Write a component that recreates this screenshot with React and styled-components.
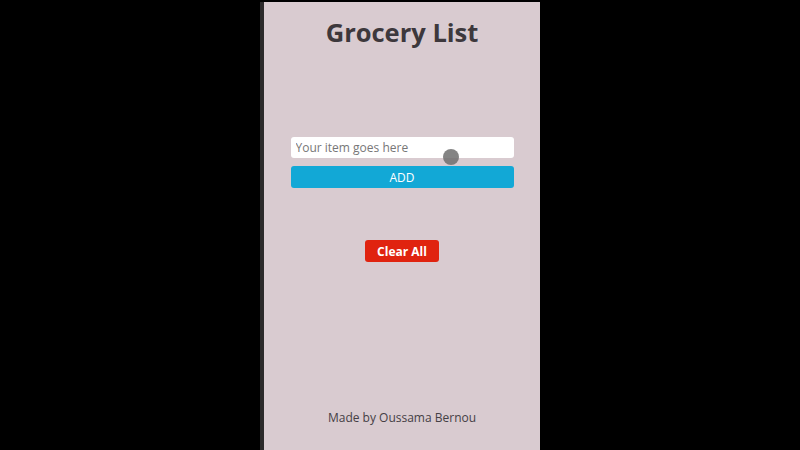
import React from "react";
import styled, { createGlobalStyle } from "styled-components";

const Global = createGlobalStyle`
  html, body { margin: 0; padding: 0; background: #000; }
  body { font-family: "Open Sans", "Noto Sans", sans-serif; }
`;

const Stage = styled.div`
  width: 800px;
  height: 450px;
  background: #000;
  display: flex;
  justify-content: center;
  overflow: hidden;
`;

const Panel = styled.div`
  position: relative;
  margin-top: 2px;
  width: 276px;
  height: 448px;
  background: #d9cbd0;
  border-left: 4px solid #2c2a2b;
  display: flex;
  flex-direction: column;
  align-items: center;
  box-sizing: content-box;
`;

const Title = styled.h1`
  margin: 12px 0 0;
  font-size: 25.5px;
  line-height: 36px;
  font-weight: 700;
  color: #3d383c;
`;

const Form = styled.div`
  margin-top: 87px;
  width: 223px;
  display: flex;
  flex-direction: column;
  gap: 8px;
`;

const Input = styled.input`
  box-sizing: border-box;
  width: 100%;
  height: 21px;
  border: none;
  border-radius: 3px;
  background: #fff;
  padding: 0 5px;
  font-family: "Open Sans", sans-serif;
  font-size: 12px;
  color: #333;
  outline: none;
  &::placeholder { color: #777; }
`;

const AddButton = styled.button`
  height: 22px;
  border: none;
  border-radius: 3px;
  background: #12a8d6;
  color: #fff;
  font-family: "Open Sans", sans-serif;
  font-size: 12px;
  padding: 0;
`;

const ClearButton = styled.button`
  margin-top: 52px;
  width: 74px;
  height: 22px;
  border: none;
  border-radius: 3px;
  background: #e0230f;
  color: #fff;
  font-family: "Open Sans", sans-serif;
  font-weight: 700;
  font-size: 12px;
  padding: 0;
`;

const Footer = styled.footer`
  margin-top: auto;
  margin-bottom: 24px;
  font-size: 12px;
  color: #454045;
`;

const Cursor = styled.div`
  position: absolute;
  left: 179px;
  top: 147px;
  width: 16px;
  height: 16px;
  border-radius: 50%;
  background: rgba(110, 110, 110, 0.85);
`;

export default function App() {
  return (
    <Stage>
      <Global />
      <Panel>
        <Title>Grocery List</Title>
        <Form>
          <Input placeholder="Your item goes here" />
          <AddButton>ADD</AddButton>
        </Form>
        <ClearButton>Clear All</ClearButton>
        <Footer>Made by Oussama Bernou</Footer>
        <Cursor />
      </Panel>
    </Stage>
  );
}
